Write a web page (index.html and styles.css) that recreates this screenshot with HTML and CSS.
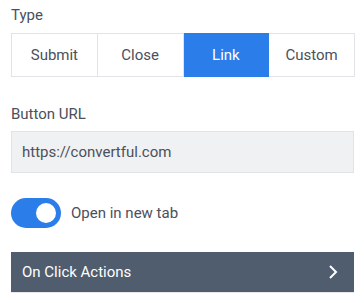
FILE: index.html
```html
<!DOCTYPE html>
<html>
<head>
<meta charset="utf-8">
<link rel="stylesheet" href="styles.css">
</head>
<body>
<div class="panel">
  <div class="label label-type">Type</div>
  <div class="segmented">
    <div class="seg">Submit</div>
    <div class="seg">Close</div>
    <div class="seg active">Link</div>
    <div class="seg">Custom</div>
  </div>
  <div class="label label-url">Button URL</div>
  <div class="input">https://convertful.com</div>
  <div class="toggle-row">
    <div class="toggle"><div class="knob"></div></div>
    <div class="toggle-label">Open in new tab</div>
  </div>
  <div class="accordion">
    <span class="acc-title">On Click Actions</span>
    <svg class="chev" width="10" height="14" viewBox="0 0 10 14"><path d="M2 1 L8 7 L2 13" fill="none" stroke="#fff" stroke-width="2"/></svg>
  </div>
</div>
</body>
</html>
```
FILE: styles.css
```css
* { box-sizing: border-box; }
html, body { margin: 0; padding: 0; background: #fff; }
body { font-family: Roboto, "Liberation Sans", sans-serif; color: #4a505c; font-size: 15px; }
.panel { padding: 5px 9px 0 11px; width: 364px; }
.label { line-height: 20px; height: 20px; font-size: 15px; }
.label-type { margin-bottom: 8px; }
.segmented { display: flex; height: 44px; border: 1px solid #e1e3e6; width: 344px; }
.seg { flex: 1; display: flex; align-items: center; justify-content: center; border-right: 1px solid #e1e3e6; font-size: 15px; }
.seg:last-child { border-right: none; }
.seg.active { background: #2b7de9; color: #fff; border-right-color: #2b7de9; margin: -1px 0; }
.label-url { margin-top: 27px; margin-bottom: 7px; }
.input { height: 42px; border: 1px solid #e1e3e6; background: #f0f1f3; padding: 0 10px; display: flex; align-items: center; font-size: 15px; width: 343px; }
.toggle-row { margin-top: 25px; display: flex; align-items: center; height: 30px; }
.toggle { width: 50px; height: 30px; border-radius: 15px; background: #2b7de9; position: relative; }
.knob { position: absolute; right: 5px; top: 5px; width: 20px; height: 20px; border-radius: 50%; background: #fff; }
.toggle-label { margin-left: 10px; font-size: 15px; }
.accordion { margin-top: 24px; height: 41px; background: #4f5d6e; border-bottom: 1px solid #e6e8eb; color: #fff; display: flex; align-items: center; justify-content: space-between; padding: 0 16px 0 11px; width: 343px; font-size: 15px; }
.chev { display: block; }
```
